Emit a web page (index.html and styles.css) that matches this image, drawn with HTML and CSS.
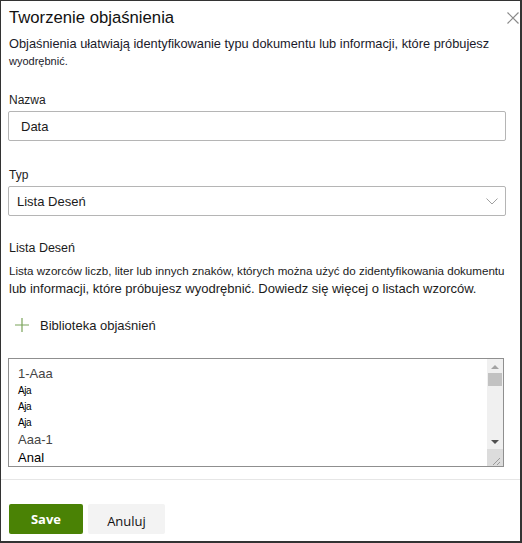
FILE: index.html
```html
<!DOCTYPE html>
<html lang="pl">
<head>
<meta charset="utf-8">
<title>Tworzenie objaśnienia</title>
<link rel="stylesheet" href="styles.css">
</head>
<body>
<div class="dialog">
  <div class="header">
    <h1 class="title">Tworzenie objaśnienia</h1>
    <svg class="close" width="12" height="12" viewBox="0 0 12 12"><path d="M0.5 0.5L11.5 11.5M11.5 0.5L0.5 11.5" stroke="#8a8a8a" stroke-width="1.2" fill="none"/></svg>
  </div>
  <p class="intro">Objaśnienia ułatwiają identyfikowanie typu dokumentu lub informacji, które próbujesz <span class="small">wyodrębnić.</span></p>

  <label class="label label-name">Nazwa</label>
  <div class="input">Data</div>

  <label class="label label-type">Typ</label>
  <div class="select">
    <span>Lista Deseń</span>
    <svg class="chev" width="12" height="7" viewBox="0 0 12 7"><path d="M0.5 0.5L6 6L11.5 0.5" stroke="#a0a0a0" stroke-width="1" fill="none"/></svg>
  </div>

  <div class="section-title">Lista Deseń</div>
  <p class="section-desc"><span class="cond">Lista wzorców liczb, liter lub innych znaków, których można użyć do zidentyfikowania dokumentu</span><br>lub informacji, które próbujesz wyodrębnić. Dowiedz się więcej o listach wzorców.</p>

  <div class="library">
    <svg class="plus" width="14" height="14" viewBox="0 0 14 14"><path d="M7 0V14M0 7H14" stroke="#7aa35a" stroke-width="1.2" fill="none"/></svg>
    <span>Biblioteka objaśnień</span>
  </div>

  <div class="listbox">
    <div class="items">
      <div class="item big gray">1-Aaa</div>
      <div class="item tiny">Aja</div>
      <div class="item tiny">Aja</div>
      <div class="item tiny">Aja</div>
      <div class="item big gray">Aaa-1</div>
      <div class="item big">Anal</div>
    </div>
    <div class="scrollbar">
      <div class="arrow up"></div>
      <div class="thumb"></div>
      <div class="track"></div>
      <div class="arrow down"></div>
      <div class="grip">
        <svg width="15" height="17" viewBox="0 0 15 17"><path d="M13 9L6 16M13 13L10 16" stroke="#9a9a9a" stroke-width="1" fill="none"/></svg>
      </div>
    </div>
  </div>

  <div class="footer">
    <button class="btn primary">Save</button>
    <button class="btn secondary">Anuluj</button>
  </div>
</div>
</body>
</html>
```
FILE: styles.css
```css
* { box-sizing: border-box; }
html, body { margin: 0; padding: 0; background: #fff; }
body { font-family: "Liberation Sans", Arial, sans-serif; color: #1b1b1b; }

.dialog {
  width: 522px;
  height: 543px;
  border: 1px solid #333;
  border-right-width: 2px;
  border-bottom-width: 2px;
  padding: 0 0 0 7px;
  overflow: hidden;
}

.header {
  display: flex;
  justify-content: space-between;
  align-items: center;
  height: 32px;
  padding: 2px 1px 0 1px;
}
.title {
  margin: 0;
  font-size: 16.7px;
  font-weight: normal;
  color: #111;
}
.close { margin-top: 0; }

.intro {
  margin: 0;
  padding: 2px 0 0 1px;
  font-size: 12.8px;
  line-height: 17px;
  color: #1a1a2a;
}
.intro .small { font-size: 11px; }

.label {
  display: block;
  font-size: 12px;
  padding-left: 1px;
  color: #222;
}
.label-name { margin-top: 22px; line-height: 16px; }
.label-type { margin-top: 26px; line-height: 16px; }

.input, .select {
  width: 498px;
  height: 30px;
  border: 1px solid #b5b5b5;
  border-radius: 2px;
  font-size: 13px;
  display: flex;
  align-items: center;
  margin-top: 3px;
}
.input { padding-left: 12px; }
.select {
  justify-content: space-between;
  padding: 0 7px 0 8px;
}
.chev { margin-top: 1px; }

.section-title {
  margin-top: 24px;
  font-size: 12.5px;
  line-height: 16px;
  padding-left: 1px;
}
.section-desc {
  margin: 6px 0 0;
  font-size: 13px;
  line-height: 18px;
  padding-left: 1px;
}
.section-desc .cond { font-size: 11.6px; }

.library {
  display: flex;
  align-items: center;
  gap: 11px;
  margin-top: 17px;
  padding-left: 7px;
  font-size: 13px;
  height: 20px;
}

.listbox {
  margin-top: 23px;
  width: 496px;
  height: 109px;
  border: 1px solid #8f8f8f;
  display: flex;
}
.items {
  flex: 1;
  padding: 6px 0 0 9px;
}
.item { color: #000; }
.item.big { font-size: 13px; line-height: 18px; }
.item.tiny { font-size: 10px; line-height: 16px; letter-spacing: -0.4px; }
.item.gray { color: #444; }

.scrollbar {
  width: 16px;
  background: #f0f0f0;
  display: flex;
  flex-direction: column;
}
.arrow { height: 14px; position: relative; }
.arrow.up::after, .arrow.down::after {
  content: "";
  position: absolute;
  left: 4px;
  border-left: 4px solid transparent;
  border-right: 4px solid transparent;
}
.arrow.up::after { top: 6px; border-bottom: 4px solid #a3a3a3; }
.arrow.down::after { top: 5px; border-top: 4px solid #505050; }
.thumb { height: 13px; margin: 0 1px; background: #c2c2c2; }
.track { flex: 1; }
.grip { height: 17px; background: #dcdcdc; display: flex; }

.footer {
  margin-top: 12px;
  margin-left: -7px;
  border-top: 1px solid #e6e6e6;
  padding: 24px 0 0 8px;
  display: flex;
  gap: 5px;
}
.btn {
  height: 30px;
  border: none;
  border-radius: 2px;
  font-family: "Open Sans", "Liberation Sans", sans-serif;
  font-size: 13px;
  padding: 0;
}
.primary {
  width: 74px;
  background: #4a8205;
  color: #fff;
  font-weight: bold;
}
.secondary {
  width: 77px;
  background: #f3f3f3;
  color: #111;
  padding-top: 3px;
}
```
